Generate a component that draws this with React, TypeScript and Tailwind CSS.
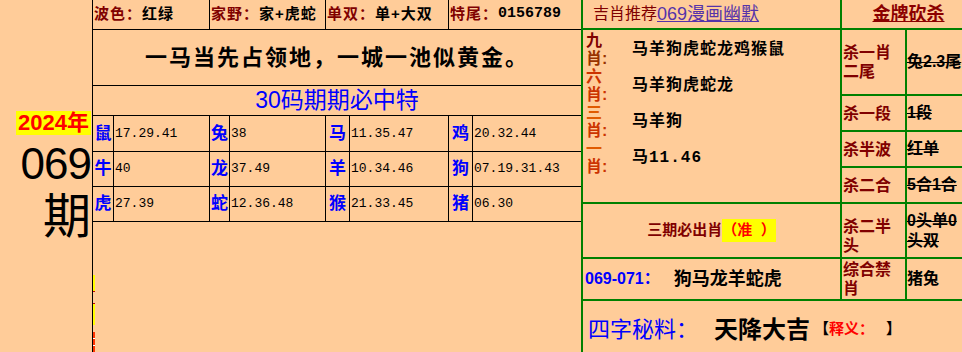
import React from "react";

const SANS = "font-['Liberation_Sans','Noto_Sans_CJK_SC',sans-serif]";
const MONO = "font-['Liberation_Mono','Noto_Sans_CJK_SC',monospace]";

const grid: [string, string][][] = [
  [["鼠", "17.29.41"], ["兔", "38"], ["马", "11.35.47"], ["鸡", "20.32.44"]],
  [["牛", "40"], ["龙", "37.49"], ["羊", "10.34.46"], ["狗", "07.19.31.43"]],
  [["虎", "27.39"], ["蛇", "12.36.48"], ["猴", "21.33.45"], ["猪", "06.30"]],
];

const top: [string, string, boolean][] = [
  ["波色：", "红绿", false],
  ["家野：", "家+虎蛇", false],
  ["单双：", "单+大双", false],
  ["特尾：", "0156789", true],
];

const labelLines: [string, string][] = [
  ["九", "#800000"],
  ["肖:", "#993300"],
  ["六", "#cc3300"],
  ["肖:", "#cc3300"],
  ["三", "#e05a00"],
  ["肖:", "#cc3300"],
  ["一", "#e05a00"],
  ["肖:", "#cc3300"],
];

const picks = ["马羊狗虎蛇龙鸡猴鼠", "马羊狗虎蛇龙", "马羊狗", "马11.46"];

function Kill({ label, value, strike = true, extra = "" }: { label: string; value: string; strike?: boolean; extra?: string }) {
  return (
    <>
      <div className={`bg-[#ffcc99] flex items-center pl-[1px] ${extra}`}>
        <span className={`${SANS} text-[16px] leading-[19px] font-bold text-[#800000]`}>{label}</span>
      </div>
      <div className="bg-[#ffcc99] flex items-center">
        <span className={`${SANS} text-[16px] leading-[20px] font-bold text-black ${strike ? "line-through" : ""}`}>{value}</span>
      </div>
    </>
  );
}

export default function App() {
  return (
    <div className="w-[962px] h-[352px] overflow-hidden bg-[#ffcc99]">
      <div className="flex w-[967px] h-[352px]">
        {/* left column */}
        <div className="w-[92px] shrink-0 flex flex-col items-end justify-center gap-[6px] pr-[1px]">
          <div className={`${SANS} bg-[#ffff00] text-[#ff0000] font-bold text-[22px] leading-[24px] px-[2px]`}>2024年</div>
          <div className={`${SANS} text-black text-[44px] leading-[46px] tracking-[-1px]`}>069</div>
          <div className={`${SANS} text-black text-[48px] leading-[48px]`}>期</div>
        </div>

        {/* middle */}
        <div className="w-[489px] shrink-0 border-l border-black flex flex-col">
          <div className="grid grid-cols-[20px_95px_19px_95px_23px_98px_23px_108px] grid-rows-[29px_55px_29px_35px_34px_34px] gap-px bg-black pb-px">
            {top.map(([l, v, mono]) => (
              <div key={l} className="col-span-2 bg-[#ffcc99] flex items-center pl-[1px]">
                <span className={`${SANS} text-[15px] font-bold tracking-[1px] text-[#800000]`}>{l}</span>
                <span className={`${mono ? MONO : SANS} text-[15px] font-bold ${mono ? "" : "tracking-[1px]"} text-black`}>{v}</span>
              </div>
            ))}
            <div className="col-span-8 bg-[#ffcc99] flex items-center justify-center">
              <span className={`${SANS} text-[22px] font-bold tracking-[2px] text-black`}>一马当先占领地，一城一池似黄金。</span>
            </div>
            <div className="col-span-8 bg-[#ffcc99] flex items-center justify-center">
              <span className={`${SANS} text-[23px] text-[#0000ff]`}>30码期期必中特</span>
            </div>
            {grid.map((row, ri) =>
              row.map(([z, n], ci) => (
                <React.Fragment key={`${ri}-${ci}`}>
                  <div className="bg-[#ffcc99] flex items-center justify-center">
                    <span className={`${SANS} text-[17px] font-bold text-[#0000ff]`}>{z}</span>
                  </div>
                  <div className="bg-[#ffcc99] flex items-center pl-[1px]">
                    <span className={`${MONO} text-[13px] text-black`}>{n}</span>
                  </div>
                </React.Fragment>
              ))
            )}
          </div>
          <div className="mt-[53px] w-[2px] h-[17px] bg-[#ffff00] border-b border-[#cc0000]" />
          <div className="mt-[11px] w-[2px] h-[22px] bg-[#ffff00] border-t border-[#cc0000]" />
          <div className="mt-[7px] w-[2px] h-[20px] border-l-2 border-dashed border-[#ff3300] bg-white" />
        </div>

        {/* right */}
        <div className="flex-1 grid grid-cols-[257px_63px_60px] grid-rows-[28px_64px_34px_34px_34px_53px_40px_51px] gap-[2px] bg-[#008000] pl-[2px]">
          <div className="bg-[#ffcc99] flex items-center pl-[10px]">
            <span className={`${SANS} text-[16px] text-[#800000]`}>吉肖推荐</span>
            <span className={`${SANS} text-[18px] text-[#5533aa] underline`}>069漫画幽默</span>
          </div>
          <div className="col-span-2 bg-[#ffcc99] flex items-center justify-center pl-[8px]">
            <span className={`${SANS} text-[18px] font-bold text-[#8b0000] underline`}>金牌砍杀</span>
          </div>

          <div className="row-span-4 bg-[#ffcc99] flex pl-[3px] pt-[2px]">
            <div className="w-[46px] flex flex-col">
              {labelLines.map(([t, c], i) => (
                <div key={i} className={`${SANS} text-[16px] leading-[18px] font-bold`} style={{ color: c }}>
                  {t}
                </div>
              ))}
            </div>
            <div className="flex flex-col">
              {picks.map((p) => (
                <div key={p} className={`h-[36px] flex items-center ${MONO} text-[16px] font-bold tracking-[1px] text-black`}>
                  {p}
                </div>
              ))}
            </div>
          </div>
          <Kill label="杀一肖二尾" value="兔2.3尾" />
          <Kill label="杀一段" value="1段" />
          <Kill label="杀半波" value="红单" />
          <Kill label="杀二合" value="5合1合" />

          <div className="bg-[#ffcc99] flex items-center justify-center">
            <span className={`${SANS} text-[15px] font-bold text-[#800000]`}>三期必出肖</span>
            <span className={`${SANS} text-[15px] font-bold text-[#ff0000] bg-[#ffff00]`}>（准&nbsp;&nbsp;）</span>
          </div>
          <Kill label="杀二半头" value="0头单0头双" extra="pt-[10px]" />

          <div className="bg-[#ffcc99] flex items-center pl-[2px]">
            <span className={`${SANS} text-[16px] font-bold text-[#0000ff]`}>069-071：</span>
            <span className={`${SANS} text-[18px] font-bold text-black ml-[14px]`}>狗马龙羊蛇虎</span>
          </div>
          <Kill label="综合禁肖" value="猪兔" strike={false} />

          <div className="col-span-3 bg-[#ffcc99] flex items-center pl-[5px] pt-[6px]">
            <span className={`${SANS} text-[22px] text-[#0000ff]`}>四字秘料：</span>
            <span className={`${SANS} text-[24px] font-bold text-black ml-[16px]`}>天降大吉</span>
            <span className={`${SANS} text-[15px] font-bold text-black ml-[4px]`}>【</span>
            <span className={`${SANS} text-[15px] font-bold text-[#ff0000]`}>释义：</span>
            <span className={`${SANS} text-[15px] font-bold text-black ml-[12px]`}>】</span>
          </div>
        </div>
      </div>
    </div>
  );
}
